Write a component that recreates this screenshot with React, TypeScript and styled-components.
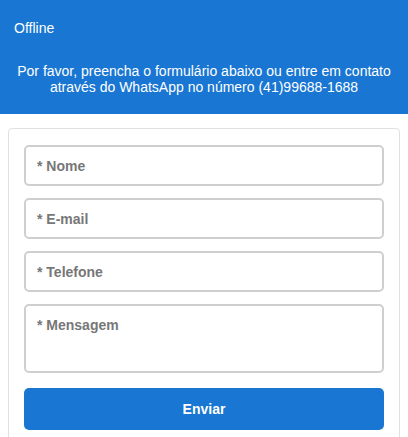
import React from "react";
import styled, { createGlobalStyle } from "styled-components";

const Global = createGlobalStyle`
  html, body { margin: 0; padding: 0; background: #ffffff; }
  body { font-family: "Liberation Sans", Arial, sans-serif; }
  * { box-sizing: border-box; }
`;

const Header = styled.header`
  background: #1976d2;
  color: #ffffff;
  padding: 18px 14px 19px;
  height: 114px;
`;

const Title = styled.div`
  font-size: 14px;
  line-height: 20px;
`;

const Description = styled.p`
  margin: 25px 0 0;
  font-size: 14px;
  line-height: 16px;
  text-align: center;
`;

const Card = styled.form`
  margin: 14px 8px 0;
  border: 1px solid #e0e0e0;
  border-radius: 4px;
  padding: 16px 15px 15px;
  display: flex;
  flex-direction: column;
  gap: 12px;
  background: #fff;
`;

const fieldStyles = `
  width: 100%;
  border: 2px solid #cfcfcf;
  border-radius: 5px;
  padding: 0 11px;
  font-family: "Liberation Sans", Arial, sans-serif;
  font-size: 14px;
  font-weight: bold;
  color: #333;
  background: #fff;
  outline: none;
  &::placeholder { color: #777777; font-weight: bold; opacity: 1; }
`;

const Field = styled.input`
  ${fieldStyles}
  height: 41px;
`;

const Area = styled.textarea`
  ${fieldStyles}
  height: 69px;
  padding-top: 11px;
  line-height: 16px;
  resize: none;
  display: block;
`;

const Submit = styled.button`
  margin-top: 3px;
  height: 42px;
  border: none;
  border-radius: 5px;
  background: #1976d2;
  color: #fff;
  font-family: "Liberation Sans", Arial, sans-serif;
  font-size: 14px;
  font-weight: bold;
  cursor: pointer;
`;

export default function App() {
  return (
    <>
      <Global />
      <Header>
        <Title>Offline</Title>
        <Description>
          Por favor, preencha o formulário abaixo ou entre em contato
          <br />
          através do WhatsApp no número (41)99688-1688
        </Description>
      </Header>
      <Card onSubmit={(e) => e.preventDefault()}>
        <Field placeholder="* Nome" />
        <Field placeholder="* E-mail" />
        <Field placeholder="* Telefone" />
        <Area placeholder="* Mensagem" />
        <Submit type="submit">Enviar</Submit>
      </Card>
    </>
  );
}
